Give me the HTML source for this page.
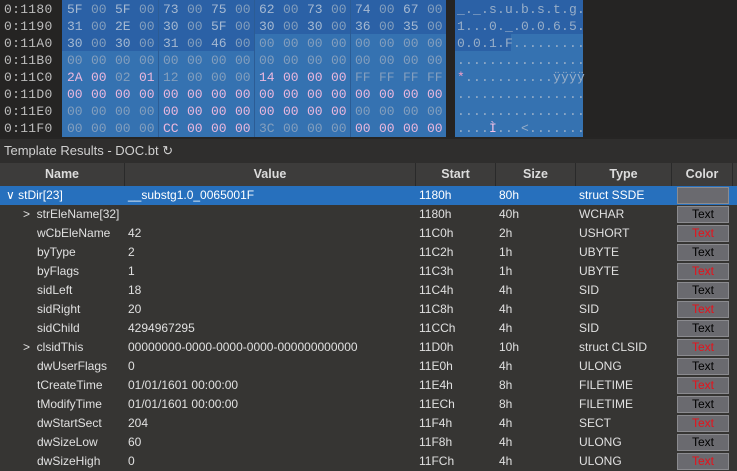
<!DOCTYPE html>
<html><head><meta charset="utf-8"><style>
*{margin:0;padding:0;box-sizing:border-box}
body{width:737px;height:471px;overflow:hidden;background:#262524;font-family:"Liberation Sans",sans-serif;position:relative}
.hex{position:absolute;left:0;top:0;width:737px;height:137px;background:#252423}
.addr{position:absolute;left:0;width:62px;font:13px "Liberation Mono",monospace;color:#bdbdbd;padding-left:4px;letter-spacing:0.3px}
.hb{position:absolute;left:62px;top:0;width:384px;height:137px;background:#3572b1}
.ab{position:absolute;left:455px;top:0;width:128px;height:137px;background:#3572b1}
.dk{position:absolute;background:#2b61a6}
.row{position:absolute;left:62px;height:17px;font:13px "Liberation Mono",monospace;line-height:17px;white-space:nowrap}
.row i{font-style:normal;display:inline-block;width:24px;padding-left:5px;color:#849fbe}
.row i.w{color:#a5b9d2}
.row i.p{color:#ebb8de}
.asc{position:absolute;left:457px;height:17px;font:13px "Liberation Mono",monospace;line-height:17px;color:#98aec8;letter-spacing:0.2px;white-space:pre}
.vl{position:absolute;top:0;width:1px;height:137px;background:#2c5c94}
.title{position:absolute;left:0;top:139px;width:737px;height:24px;background:#2f2e2d;color:#d0d0d0;font-size:13px;line-height:24px;padding-left:4px}
.th{position:absolute;top:163px;left:0;width:737px;height:23px;background:#3d3c3b;color:#dcdcdc;font-size:12.5px;font-weight:bold;line-height:23px}
.th div{position:absolute;top:0;height:23px;text-align:center;border-right:1px solid #2a2a2a}
.rows{position:absolute;top:186px;left:0;width:737px}
.r{position:relative;height:19px;font-size:12px;line-height:19px;color:#e0e0e0;background:#363533}
.r.sel{background:#2770bd;color:#fff}
.r span{position:absolute;top:0}
.c{position:absolute;left:677px;top:1px;width:52px;height:17px;background:#6a6a6f;border:1px solid #8b8b8f;color:#000;text-align:center;line-height:15px;font-size:12px}
.c.red{color:#e8111a}
</style></head><body>
<div class="hex">
<div class="hb"></div><div class="ab"></div>
<div class="dk" style="left:62px;top:0;width:384px;height:34px"></div>
<div class="dk" style="left:62px;top:34px;width:192px;height:17px"></div>
<div class="dk" style="left:455px;top:0;width:128px;height:34px"></div>
<div class="dk" style="left:455px;top:34px;width:56px;height:17px"></div>
<div class="vl" style="left:158px"></div><div class="vl" style="left:254px"></div><div class="vl" style="left:350px"></div>
<div class="addr" style="top:1px;line-height:17px">0:1180<br>0:1190<br>0:11A0<br>0:11B0<br>0:11C0<br>0:11D0<br>0:11E0<br>0:11F0</div>
<div class="row" style="top:1px"><i class="w">5F</i><i>00</i><i class="w">5F</i><i>00</i><i class="w">73</i><i>00</i><i class="w">75</i><i>00</i><i class="w">62</i><i>00</i><i class="w">73</i><i>00</i><i class="w">74</i><i>00</i><i class="w">67</i><i>00</i></div>
<div class="row" style="top:18px"><i class="w">31</i><i>00</i><i class="w">2E</i><i>00</i><i class="w">30</i><i>00</i><i class="w">5F</i><i>00</i><i class="w">30</i><i>00</i><i class="w">30</i><i>00</i><i class="w">36</i><i>00</i><i class="w">35</i><i>00</i></div>
<div class="row" style="top:35px"><i class="w">30</i><i>00</i><i class="w">30</i><i>00</i><i class="w">31</i><i>00</i><i class="w">46</i><i>00</i><i>00</i><i>00</i><i>00</i><i>00</i><i>00</i><i>00</i><i>00</i><i>00</i></div>
<div class="row" style="top:52px"><i>00</i><i>00</i><i>00</i><i>00</i><i>00</i><i>00</i><i>00</i><i>00</i><i>00</i><i>00</i><i>00</i><i>00</i><i>00</i><i>00</i><i>00</i><i>00</i></div>
<div class="row" style="top:69px"><i class="p">2A</i><i class="p">00</i><i>02</i><i class="p">01</i><i>12</i><i>00</i><i>00</i><i>00</i><i class="p">14</i><i class="p">00</i><i class="p">00</i><i class="p">00</i><i>FF</i><i>FF</i><i>FF</i><i>FF</i></div>
<div class="row" style="top:86px"><i class="p">00</i><i class="p">00</i><i class="p">00</i><i class="p">00</i><i class="p">00</i><i class="p">00</i><i class="p">00</i><i class="p">00</i><i class="p">00</i><i class="p">00</i><i class="p">00</i><i class="p">00</i><i class="p">00</i><i class="p">00</i><i class="p">00</i><i class="p">00</i></div>
<div class="row" style="top:103px"><i>00</i><i>00</i><i>00</i><i>00</i><i class="p">00</i><i class="p">00</i><i class="p">00</i><i class="p">00</i><i class="p">00</i><i class="p">00</i><i class="p">00</i><i class="p">00</i><i>00</i><i>00</i><i>00</i><i>00</i></div>
<div class="row" style="top:120px"><i>00</i><i>00</i><i>00</i><i>00</i><i class="p">CC</i><i class="p">00</i><i class="p">00</i><i class="p">00</i><i>3C</i><i>00</i><i>00</i><i>00</i><i class="p">00</i><i class="p">00</i><i class="p">00</i><i class="p">00</i></div>
<div class="asc" style="top:1px">_._.s.u.b.s.t.g.</div>
<div class="asc" style="top:18px">1...0._.0.0.6.5.</div>
<div class="asc" style="top:35px">0.0.1.F.........</div>
<div class="asc" style="top:52px">................</div>
<div class="asc" style="top:69px"><span style="color:#f3a0c8">*</span>...........ÿÿÿÿ</div>
<div class="asc" style="top:86px">................</div>
<div class="asc" style="top:103px">................</div>
<div class="asc" style="top:120px">....<span style="color:#f3c1e6">Ì</span>...&lt;.......</div>
</div>
<div class="title">Template Results - DOC.bt &#x21bb;</div>
<div class="th">
<div style="left:0;width:125px">Name</div>
<div style="left:125px;width:291px">Value</div>
<div style="left:416px;width:80px">Start</div>
<div style="left:496px;width:80px">Size</div>
<div style="left:576px;width:96px">Type</div>
<div style="left:672px;width:61px">Color</div>
</div>
<div class="rows">
<div class="r sel"><span style="left:6px">&#x2228; stDir[23]</span><span style="left:128px">__substg1.0_0065001F</span><span style="left:419px">1180h</span><span style="left:499px">80h</span><span style="left:579px">struct SSDE</span><div class="c" style="background:#6a6a6f"></div></div>
<div class="r"><span style="left:23px">&gt;&nbsp; strEleName[32]</span><span style="left:419px">1180h</span><span style="left:499px">40h</span><span style="left:579px">WCHAR</span><div class="c">Text</div></div>
<div class="r"><span style="left:37px">wCbEleName</span><span style="left:128px">42</span><span style="left:419px">11C0h</span><span style="left:499px">2h</span><span style="left:579px">USHORT</span><div class="c red">Text</div></div>
<div class="r"><span style="left:37px">byType</span><span style="left:128px">2</span><span style="left:419px">11C2h</span><span style="left:499px">1h</span><span style="left:579px">UBYTE</span><div class="c">Text</div></div>
<div class="r"><span style="left:37px">byFlags</span><span style="left:128px">1</span><span style="left:419px">11C3h</span><span style="left:499px">1h</span><span style="left:579px">UBYTE</span><div class="c red">Text</div></div>
<div class="r"><span style="left:37px">sidLeft</span><span style="left:128px">18</span><span style="left:419px">11C4h</span><span style="left:499px">4h</span><span style="left:579px">SID</span><div class="c">Text</div></div>
<div class="r"><span style="left:37px">sidRight</span><span style="left:128px">20</span><span style="left:419px">11C8h</span><span style="left:499px">4h</span><span style="left:579px">SID</span><div class="c red">Text</div></div>
<div class="r"><span style="left:37px">sidChild</span><span style="left:128px">4294967295</span><span style="left:419px">11CCh</span><span style="left:499px">4h</span><span style="left:579px">SID</span><div class="c">Text</div></div>
<div class="r"><span style="left:23px">&gt;&nbsp; clsidThis</span><span style="left:128px">00000000-0000-0000-0000-000000000000</span><span style="left:419px">11D0h</span><span style="left:499px">10h</span><span style="left:579px">struct CLSID</span><div class="c red">Text</div></div>
<div class="r"><span style="left:37px">dwUserFlags</span><span style="left:128px">0</span><span style="left:419px">11E0h</span><span style="left:499px">4h</span><span style="left:579px">ULONG</span><div class="c">Text</div></div>
<div class="r"><span style="left:37px">tCreateTime</span><span style="left:128px">01/01/1601 00:00:00</span><span style="left:419px">11E4h</span><span style="left:499px">8h</span><span style="left:579px">FILETIME</span><div class="c red">Text</div></div>
<div class="r"><span style="left:37px">tModifyTime</span><span style="left:128px">01/01/1601 00:00:00</span><span style="left:419px">11ECh</span><span style="left:499px">8h</span><span style="left:579px">FILETIME</span><div class="c">Text</div></div>
<div class="r"><span style="left:37px">dwStartSect</span><span style="left:128px">204</span><span style="left:419px">11F4h</span><span style="left:499px">4h</span><span style="left:579px">SECT</span><div class="c red">Text</div></div>
<div class="r"><span style="left:37px">dwSizeLow</span><span style="left:128px">60</span><span style="left:419px">11F8h</span><span style="left:499px">4h</span><span style="left:579px">ULONG</span><div class="c">Text</div></div>
<div class="r"><span style="left:37px">dwSizeHigh</span><span style="left:128px">0</span><span style="left:419px">11FCh</span><span style="left:499px">4h</span><span style="left:579px">ULONG</span><div class="c red">Text</div></div>
</div>
</body></html>
